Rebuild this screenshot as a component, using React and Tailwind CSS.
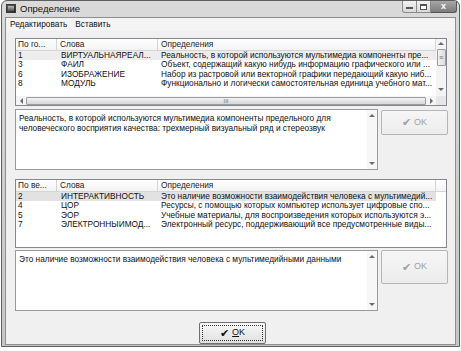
import React from "react";

const rows1 = [
  ["1", "ВИРТУАЛЬНАЯРЕАЛ...", "Реальность, в которой используются мультимедиа компоненты пре..."],
  ["3", "ФАЙЛ", "Объект, содержащий какую нибудь информацию графического или ..."],
  ["6", "ИЗОБРАЖЕНИЕ", "Набор из растровой или векторной графики передающий какую ниб..."],
  ["8", "МОДУЛЬ", "Функционально и логически самостоятельная единица учебного мат..."],
];

const rows2 = [
  ["2", "ИНТЕРАКТИВНОСТЬ", "Это наличие возможности взаимодействия человека с мультимедий..."],
  ["4", "ЦОР", "Ресурсы, с помощью которых компьютер использует цифровые спо..."],
  ["5", "ЭОР", "Учебные материалы, для воспроизведения которых используются э..."],
  ["7", "ЭЛЕКТРОННЫЙМОД...", "Электронный ресурс, поддерживающий все предусмотренные виды..."],
];

function Arrow({ dir }) {
  const pts = {
    up: "0,4 3,1 6,4",
    down: "0,1 3,4 6,1",
    left: "4,0 1,3 4,6",
    right: "1,0 4,3 1,6",
  }[dir];
  const vert = dir === "up" || dir === "down";
  return (
    <svg width={vert ? 6 : 5} height={vert ? 5 : 6} viewBox={vert ? "0 0 6 5" : "0 0 5 6"}>
      <polygon points={pts} fill="#6b6b6b" />
    </svg>
  );
}

function Header({ first }) {
  return (
    <div className="flex h-[12px] border-b border-[#d5d5d5] bg-gradient-to-b from-white to-[#f3f3f3] text-[#1e1e1e]">
      <div className="w-[41px] shrink-0 border-r border-[#d5d5d5] pl-[2px] leading-[11px]">{first}</div>
      <div className="w-[101px] shrink-0 border-r border-[#d5d5d5] pl-[3px] leading-[11px]">Слова</div>
      <div className="flex-1 border-r border-[#d5d5d5] pl-[3px] leading-[11px]">Определения</div>
    </div>
  );
}

function Rows({ rows, sel }) {
  return (
    <div className="flex flex-col">
      {rows.map(([n, w, d], i) => (
        <div
          key={n}
          className={`flex h-[9.3px] leading-[9px] text-[#111] ${i === 0 ? sel : ""}`}
        >
          <div className="w-[41px] shrink-0 pl-[2px]">{n}</div>
          <div className="w-[101px] shrink-0 pl-[4px] whitespace-nowrap overflow-hidden">{w}</div>
          <div className="flex-1 pl-[3px] whitespace-nowrap overflow-hidden">{d}</div>
        </div>
      ))}
    </div>
  );
}

function TextArea({ children }) {
  return (
    <div className="flex h-[61px] w-[363px] border border-[#9a9a9a] bg-white">
      <div className="flex-1 px-[3px] pt-[3px] leading-[10px] text-[#111]">{children}</div>
      <div className="flex w-[10px] flex-col items-center justify-between bg-[#f7f7f7] py-[3px]">
        <Arrow dir="up" />
        <Arrow dir="down" />
      </div>
    </div>
  );
}

function DisabledOk({ h }) {
  return (
    <div
      className={`ml-[3px] flex w-[67px] items-center justify-center gap-[3px] rounded-[2px] border border-[#b5b5b5] bg-gradient-to-b from-[#f6f6f6] to-[#ececec] text-[#a0a0a0] ${h}`}
    >
      <span className="text-[11px] leading-none font-['DejaVu_Sans',sans-serif]">✔</span>
      <span className="text-[9px]">OK</span>
    </div>
  );
}

export default function App() {
  return (
    <div className="h-[351px] w-[461px] overflow-hidden bg-white pl-[1px] font-['Liberation_Sans',Arial,sans-serif] text-[8.3px]">
      <div className="flex h-[347px] w-[459px] flex-col rounded-t-[6px] border border-[#5e5e5e] bg-gradient-to-b from-[#dadada] via-[#cfcfcf] to-[#c6c6c6] px-[3px] pb-[3px]">
        {/* Title bar */}
        <div className="flex h-[16px] shrink-0">
          <div className="mt-[3px] ml-[1px] h-[9px] w-[10px] border border-[#3a3a3a] bg-gradient-to-br from-[#666] to-[#222] p-[1px]">
            <div className="h-full w-full bg-gradient-to-b from-[#bbb] to-[#555]" />
          </div>
          <div className="ml-[4px] pt-[2px] text-[9.5px] leading-[12px] text-[#111]">Определение</div>
          <div className="ml-auto mr-[-1px] flex self-start">
            <div className="flex h-[12px] w-[15px] items-end justify-center rounded-bl-[3px] border border-t-0 border-[#8a8a8a] bg-gradient-to-b from-[#f2f2f2] to-[#d8d8d8] pb-[3px]">
              <div className="h-[2px] w-[7px] border border-[#555] bg-white" />
            </div>
            <div className="flex h-[12px] w-[14px] items-center justify-center border-b border-r border-[#8a8a8a] bg-gradient-to-b from-[#f2f2f2] to-[#d8d8d8]">
              <div className="h-[6px] w-[7px] border border-[#555] border-t-2 bg-white" />
            </div>
            <div className="flex h-[12px] w-[26px] items-center justify-center rounded-br-[3px] border-b border-r border-[#555] bg-gradient-to-b from-[#a8a8a8] to-[#7c7c7c] text-[9px] font-bold leading-none text-white">
              x
            </div>
          </div>
        </div>

        {/* Client */}
        <div className="flex h-[328px] flex-col border border-[#8e8e8e] bg-[#f0f0f0]">
          <div className="flex h-[13px] items-center gap-[8px] bg-[#f4f4f4] pl-[4px] text-[#111]">
            <span>Редактировать</span>
            <span>Вставить</span>
          </div>

          <div className="flex flex-col pl-[9px] pt-[7px]">
            {/* List 1 */}
            <div className="flex h-[68px] w-[432px] flex-col border border-[#828790] bg-white">
              <div className="flex h-[57px]">
                <div className="flex-1">
                  <Header first="По го..." />
                  <Rows rows={rows1} sel="bg-[#ededed]" />
                </div>
                <div className="flex w-[10px] flex-col items-center bg-[#f4f4f4]">
                  <div className="flex h-[9px] items-center">
                    <Arrow dir="up" />
                  </div>
                  <div className="mt-[1px] flex h-[17px] w-[9px] items-center justify-center rounded-[1px] border border-[#9c9c9c] bg-gradient-to-r from-[#f3f3f3] to-[#dcdcdc] text-[7px] leading-none text-[#666]">
                    ≡
                  </div>
                  <div className="mt-auto mb-[2px] flex h-[9px] items-center">
                    <Arrow dir="down" />
                  </div>
                </div>
              </div>
              <div className="flex h-[9px] items-center bg-[#f4f4f4]">
                <div className="flex w-[10px] justify-center">
                  <Arrow dir="left" />
                </div>
                <div className="flex h-[8px] w-[400px] items-center justify-center rounded-[1px] border border-[#9c9c9c] bg-gradient-to-b from-[#f3f3f3] to-[#d6d6d6] text-[6px] leading-none text-[#777]">
                  III
                </div>
                <div className="flex w-[10px] justify-center">
                  <Arrow dir="right" />
                </div>
                <div className="ml-auto h-full w-[10px] bg-[#e6e6e6]" />
              </div>
            </div>

            {/* Definition 1 */}
            <div className="mt-[3px] flex items-start">
              <TextArea>
                Реальность, в которой используются мультимедиа компоненты предельного для
                <br />
                человеческого восприятия качества: трехмерный визуальный ряд и стереозвук
              </TextArea>
              <div className="mt-[1px]">
                <DisabledOk h="h-[25px]" />
              </div>
            </div>

            {/* List 2 */}
            <div className="mt-[9px] flex h-[69px] w-[432px] flex-col border border-[#828790] bg-white">
              <div className="flex">
                <div className="flex-1">
                  <Header first="По ве..." />
                </div>
                <div className="h-[12px] w-[10px] border-b border-[#d5d5d5] bg-gradient-to-b from-white to-[#f3f3f3]" />
              </div>
              <div className="pr-[10px]">
                <Rows rows={rows2} sel="bg-[#e2e2e2]" />
              </div>
            </div>

            {/* Definition 2 */}
            <div className="mt-[2px] flex items-start">
              <TextArea>Это наличие возможности взаимодействия человека с мультимедийными данными</TextArea>
              <div className="mt-[0px]">
                <DisabledOk h="h-[34px]" />
              </div>
            </div>
          </div>

          {/* Bottom OK */}
          <div className="mt-[11px] flex justify-center pl-[4px]">
            <div className="flex h-[22px] w-[67px] items-center justify-center rounded-[2px] border border-[#707070] bg-gradient-to-b from-[#f8f8f8] to-[#e0e0e0] p-[2px]">
              <div className="flex h-full w-full items-center justify-center gap-[3px] border border-dotted border-[#333]">
                <span className="text-[11px] leading-none text-[#111] font-['DejaVu_Sans',sans-serif]">✔</span>
                <span className="text-[9px] text-[#111]">
                  <span className="underline">O</span>K
                </span>
              </div>
            </div>
          </div>
        </div>
      </div>
    </div>
  );
}
